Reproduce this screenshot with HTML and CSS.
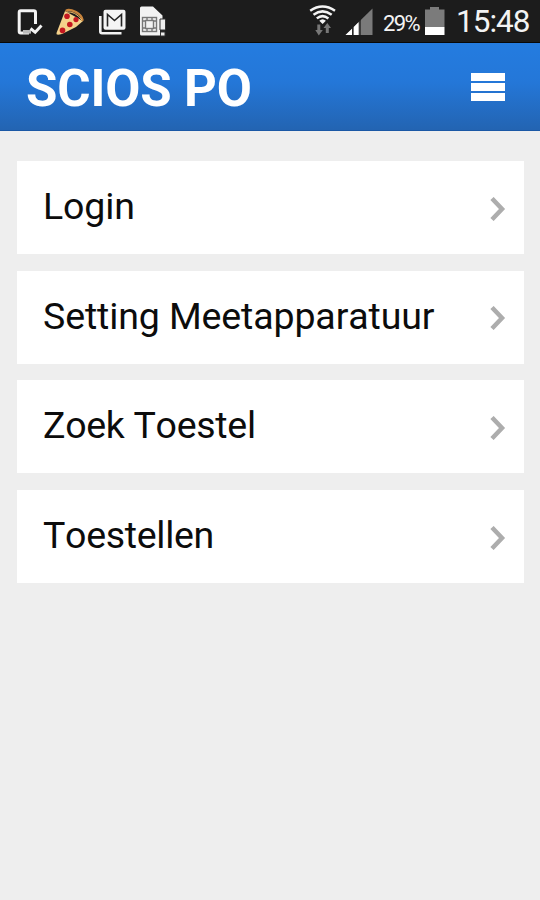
FILE: index.html
```
<!DOCTYPE html>
<html lang="nl">
<head>
<meta charset="utf-8">
<title>SCIOS PO</title>
<link rel="stylesheet" href="styles.css">
</head>
<body>
<div class="status">
  <svg class="notifications" width="180" height="42" viewBox="0 0 180 42">
    <g fill="none" stroke="#f4f4f4">
      <path d="M35.500 24V12.5Q35.500 10.8 33.800 10.8H20.7Q19.2 10.8 19.2 12.5V31.5Q19.2 33 20.7 33H29" stroke-width="3"/>
      <path d="M23 31.8H31" stroke-width="3.600" stroke="#bbb"/>
      <path d="M30.500 28.5L35.2 32.300L41.5 25.5" stroke-width="2.9"/>
    </g>
    <path d="M65 11L83 21L76 27L62 34Q55.500 36 56.500 33Z" fill="#f4d28b"/>
    <path d="M66.500 10.500Q69 8.800 76 12Q82 15.500 82.500 20" fill="none" stroke="#c9843c" stroke-width="2.4" stroke-linecap="round"/>
    <path d="M67 12Q75 11 82 20" fill="none" stroke="#f0bd6c" stroke-width="1"/>
    <g fill="#c41820"><circle cx="67" cy="16.3" r="2.8"/><circle cx="76" cy="19.6" r="2.6"/><circle cx="69.8" cy="24.5" r="2.8"/><circle cx="62.5" cy="30.4" r="2.8"/></g>
    <path d="M100.3 16V31.5Q100.3 33.2 102 33.2H121.5" fill="none" stroke="#f2f2f2" stroke-width="2.6"/>
    <rect x="103.5" y="9.8" width="22" height="20" rx="2" fill="#f4f4f4"/>
    <path d="M107.5 26.5V14.5L114.5 20.5L121.5 14.5V26.5" fill="none" stroke="#242424" stroke-width="1.6"/>
    <path d="M141.5 6.5H153L162.5 15.5V20H160V35.5H141.5Q140 35.5 140 34V8Q140 6.5 141.5 6.5Z" fill="#f2f2f2"/>
    <g fill="none" stroke="#777" stroke-width="1.4"><rect x="142.500" y="17.5" width="14" height="14"/><rect x="145.500" y="20.500" width="8" height="8"/><path d="M142.500 21H145.500M153.500 21H156.500M142.500 28H145.500M153.500 28H156.500M147 17.500V20.500M152 17.500V20.500M147 28.500V31.500M152 28.500V31.500"/></g>
    <path d="M160 19H165.500V30H160ZM160.500 32H165V36H160.500Z" fill="#eee" stroke="#333" stroke-width="1"/>
  </svg>
  <svg class="signals" width="78" height="42" viewBox="300 0 78 42">
    <g fill="none" stroke="#f4f4f4" stroke-width="2.5">
      <path d="M310.200 10.700Q322.500 2.500 335 10.700"/><path d="M313.500 14.700Q322.500 8 331.700 14.700"/><path d="M316.800 18.400Q322.500 13.800 328.400 18.400"/>
    </g>
    <path d="M319.300 20.700Q322.500 17.700 325.900 20.700L322.600 24Z" fill="#f4f4f4"/>
    <path d="M317.300 24.500H320.300V30H322.800L318.800 35.500L315.300 30H317.300ZM325.800 33V28H323.500L327.300 23L331 28H328.800V33Z" fill="#777"/>
    <path d="M345.500 35L372.500 8.500V35Z" fill="#7a7a7a"/>
    <path d="M345.500 35L352 28.700V35ZM353.500 35V27.200L358.500 22.300V35Z" fill="#fff"/>
    <path d="M352.800 27V36M360 20V36" stroke="#1c1c1c" stroke-width="1.3"/>
  </svg>
  <span class="percent">29%</span>
  <svg class="battery" width="22" height="42" viewBox="0 0 22 42">
    <path d="M1 9.500H6V7H15V9.500H20.500V27H1Z" fill="#7b7b7b"/><path d="M1 27H20.500V35H1Z" fill="#fff"/>
  </svg>
  <span class="clock">15:48</span>
</div>
<header class="header">
  <h1 class="title">SCIOS PO</h1>
  <div class="burger"><i></i><i></i><i></i></div>
</header>
<nav class="menu">
  <a class="item"><span class="label">Login</span><svg class="chevron" width="16" height="24" viewBox="0 0 16 24"><path d="M2 1.500L12 12L2 22.500"/></svg></a>
  <a class="item"><span class="label">Setting Meetapparatuur</span><svg class="chevron" width="16" height="24" viewBox="0 0 16 24"><path d="M2 1.500L12 12L2 22.500"/></svg></a>
  <a class="item"><span class="label tight">Zoek Toestel</span><svg class="chevron" width="16" height="24" viewBox="0 0 16 24"><path d="M2 1.500L12 12L2 22.500"/></svg></a>
  <a class="item"><span class="label tight">Toestellen</span><svg class="chevron" width="16" height="24" viewBox="0 0 16 24"><path d="M2 1.500L12 12L2 22.500"/></svg></a>
</nav>
</body>
</html>
```
FILE: styles.css
```
* { box-sizing: border-box; }
body { margin: 0; min-height: 900px; background: #eee; font-family: Roboto, sans-serif; color: #0c0c0c; overflow: hidden; }
.status { height: 43px; display: flex; align-items: flex-start; background: #1c1c1c; color: #f3f3f3; border-bottom: 1px solid #080808; white-space: nowrap; }
.status svg { flex: none; display: block; }
.signals { margin-left: 120px; }
.percent { width: 46px; padding-left: 5px; font-size: 22px; line-height: 47px; letter-spacing: -1.6px; }
.clock { padding-left: 10px; font-size: 31.5px; line-height: 43px; letter-spacing: -1px; }
.header { height: 88px; display: flex; justify-content: space-between; align-items: flex-start; padding: 0 35px 0 26px; background: linear-gradient(#247ce0, #2477d8 45%, #2364b2); border-bottom: 1px solid #1a58a5; }
.title { margin: 0; font-size: 51px; line-height: 91px; font-weight: 700; letter-spacing: -0.15px; color: #fff; }
.burger { display: grid; gap: 2.5px; padding-top: 30px; }
.burger i { width: 34px; height: 7.7px; background: #fff; }
.menu { display: grid; gap: 16.7px; padding: 30px 16.5px 0 17px; }
.item { height: 93px; display: flex; justify-content: space-between; align-items: flex-start; background: #fff; padding: 0 18px 0 26px; }
.label { font-size: 37.5px; line-height: 90px; font-weight: 400; font-kerning: none; letter-spacing: -0.12px; white-space: nowrap; }
.tight { letter-spacing: -0.3px; }
.chevron { margin-top: 35.5px; }
.chevron path { fill: none; stroke: #adadad; stroke-width: 4.5; }
```
